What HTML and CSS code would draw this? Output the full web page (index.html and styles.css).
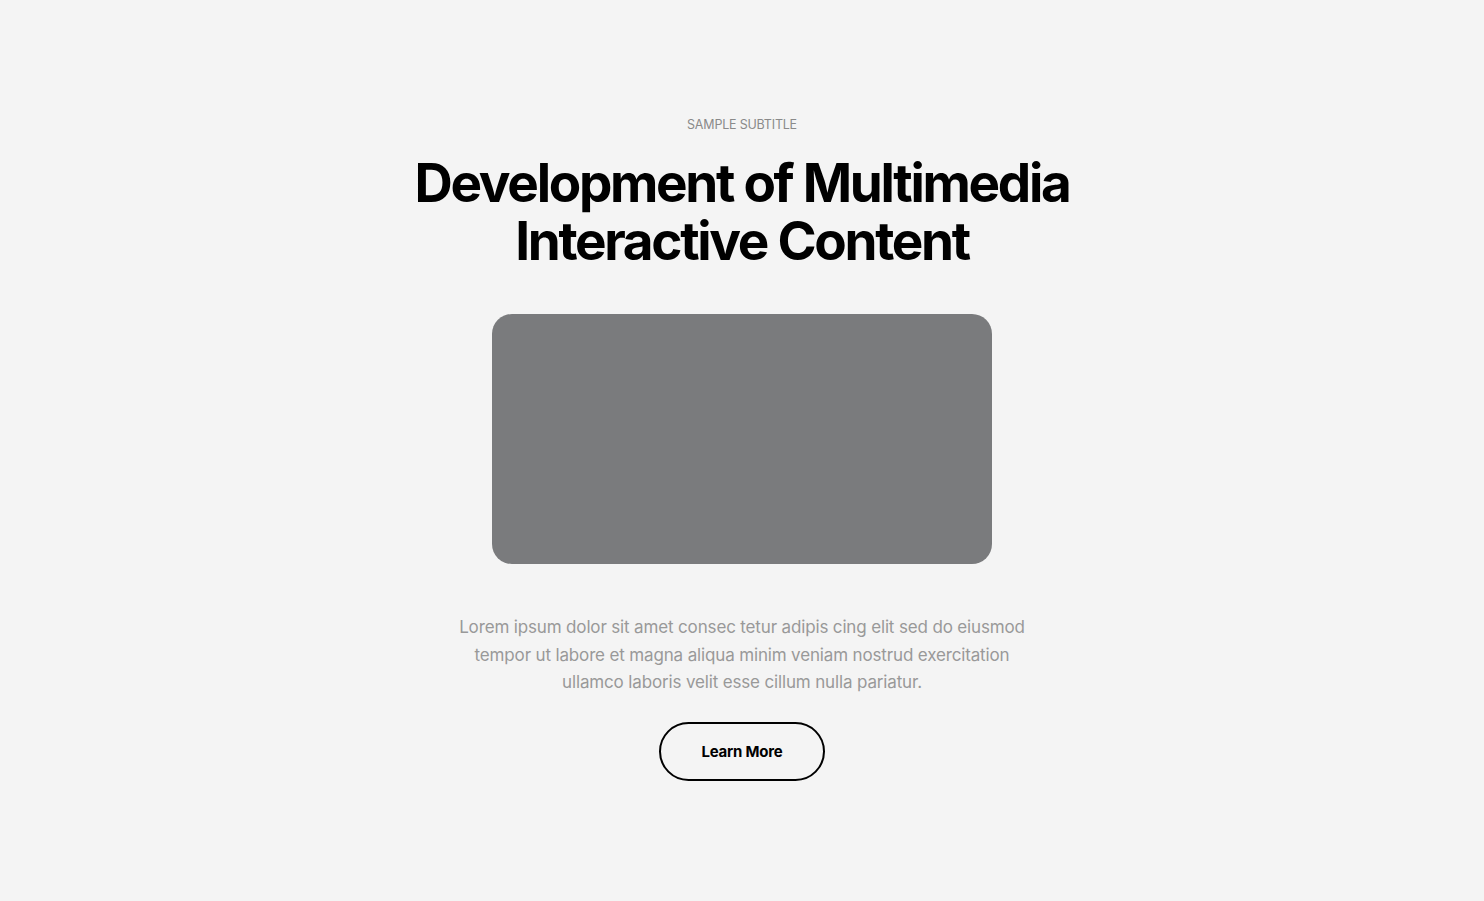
FILE: index.html
```html
<!DOCTYPE html>
<html lang="en">
<head>
<meta charset="utf-8">
<title>Development of Multimedia Interactive Content</title>
<link rel="stylesheet" href="styles.css">
</head>
<body>
<section class="hero">
  <p class="subtitle">Sample subtitle</p>
  <h1 class="title">Development of Multimedia<br>Interactive Content</h1>
  <div class="media"></div>
  <p class="text">Lorem ipsum dolor sit amet consec tetur adipis cing elit sed do eiusmod tempor ut labore et magna aliqua minim veniam nostrud exercitation ullamco laboris velit esse cillum nulla pariatur.</p>
  <a class="button" href="#">Learn More</a>
</section>
</body>
</html>
```
FILE: styles.css
```css
html, body {
  margin: 0;
  padding: 0;
  background: #f4f4f4;
}
body {
  font-family: "Inter", "Noto Sans", sans-serif;
  height: 901px;
}
.hero {
  display: flex;
  flex-direction: column;
  align-items: center;
  padding-top: 117px;
}
.subtitle {
  margin: 0;
  font-size: 12.5px;
  line-height: 16px;
  color: #8a8a8a;
  text-transform: uppercase;
  letter-spacing: -0.2px;
}
.title {
  margin: 21px 0 0;
  font-size: 53px;
  line-height: 58px;
  font-weight: 700;
  letter-spacing: -2.3px;
  text-align: center;
  color: #000;
}
.media {
  margin-top: 44px;
  width: 500px;
  height: 250px;
  border-radius: 20px;
  background: #7a7b7d;
}
.text {
  margin: 50px 0 0;
  width: 590px;
  font-size: 17px;
  line-height: 27.5px;
  color: #999999;
  text-align: center;
  letter-spacing: -0.15px;
}
.button {
  margin-top: 25px;
  display: flex;
  align-items: center;
  justify-content: center;
  box-sizing: border-box;
  width: 166px;
  height: 59px;
  border: 2px solid #000;
  border-radius: 30px;
  color: #000;
  font-size: 15px;
  font-weight: 700;
  text-decoration: none;
  letter-spacing: -0.2px;
}
```
